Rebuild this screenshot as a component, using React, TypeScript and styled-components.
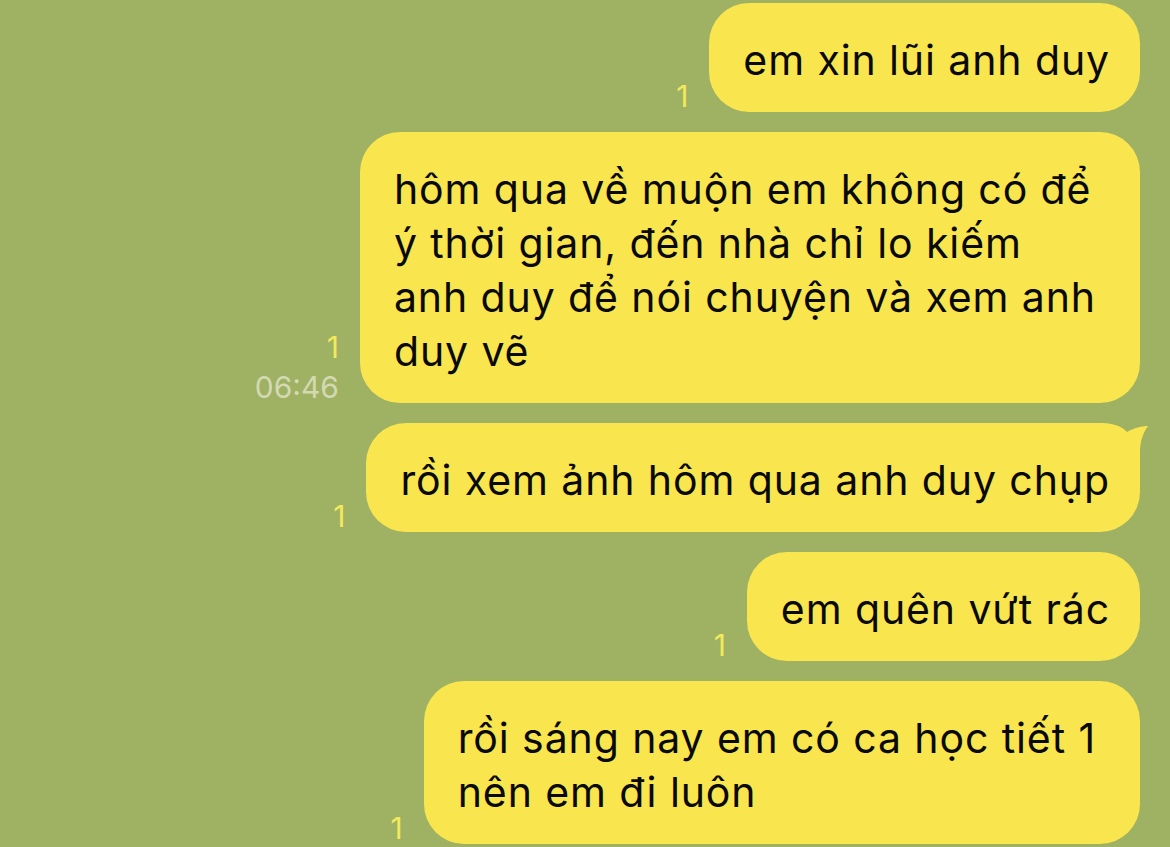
import React from "react";
import styled, { createGlobalStyle } from "styled-components";

const Global = createGlobalStyle`
  html, body { margin: 0; padding: 0; background: #9fb163; }
  body { font-family: Inter, "Noto Sans", sans-serif; }
`;

const Chat = styled.div`
  display: flex;
  flex-direction: column;
  align-items: flex-end;
  gap: 20px;
  padding: 3px 30px 0 0;
  height: 847px;
  box-sizing: border-box;
  overflow: hidden;
`;

const Row = styled.div`
  display: flex;
  align-items: flex-end;
  gap: 21px;
`;

const Meta = styled.div`
  display: flex;
  flex-direction: column;
  align-items: flex-end;
  margin-bottom: -4px;
  font-family: Inter, sans-serif;
  font-size: 30px;
  line-height: 40px;
`;

const Read = styled.span`
  color: #f2e95c;
`;

const Time = styled.span`
  color: #d3d9b2;
`;

const Bubble = styled.div<{ $wrapped?: boolean }>`
  position: relative;
  background: #f9e54e;
  border-radius: 40px;
  padding: 30px ${(p) => (p.$wrapped ? "44px" : "30px")} 25px 34px;
  font-family: Inter, sans-serif;
  font-size: 41px;
  line-height: 54px;
  color: #0a0a05;
  letter-spacing: 0.9px;
`;

const Line = styled.span`
  display: block;
  white-space: nowrap;
`;

const Tail = styled.svg`
  position: absolute;
  top: 0;
  right: -10px;
  width: 50px;
  height: 40px;
`;

type Msg = { lines: string[]; time?: string; tail?: boolean };

const messages: Msg[] = [
  { lines: ["em xin lũi anh duy"] },
  {
    lines: [
      "hôm qua về muộn em không có để",
      "ý thời gian, đến nhà chỉ lo kiếm",
      "anh duy để nói chuyện và xem anh",
      "duy vẽ",
    ],
    time: "06:46",
  },
  { lines: ["rồi xem ảnh hôm qua anh duy chụp"], tail: true },
  { lines: ["em quên vứt rác"] },
  { lines: ["rồi sáng nay em có ca học tiết 1", "nên em đi luôn"] },
];

export default function App() {
  return (
    <>
      <Global />
      <Chat>
        {messages.map((m, i) => (
          <Row key={i}>
            <Meta>
              <Read>1</Read>
              {m.time && <Time>{m.time}</Time>}
            </Meta>
            <Bubble $wrapped={m.lines.length > 1}>
              {m.tail && (
                <Tail viewBox="0 0 50 40">
                  <path
                    d="M0 0 C12 0 22 3 27 9 C34 5 42 3 48 3 C43 10 40 18 40 30 L40 40 L0 40 Z"
                    fill="#f9e54e"
                  />
                </Tail>
              )}
              {m.lines.map((l, j) => (
                <Line key={j}>{l}</Line>
              ))}
            </Bubble>
          </Row>
        ))}
      </Chat>
    </>
  );
}
